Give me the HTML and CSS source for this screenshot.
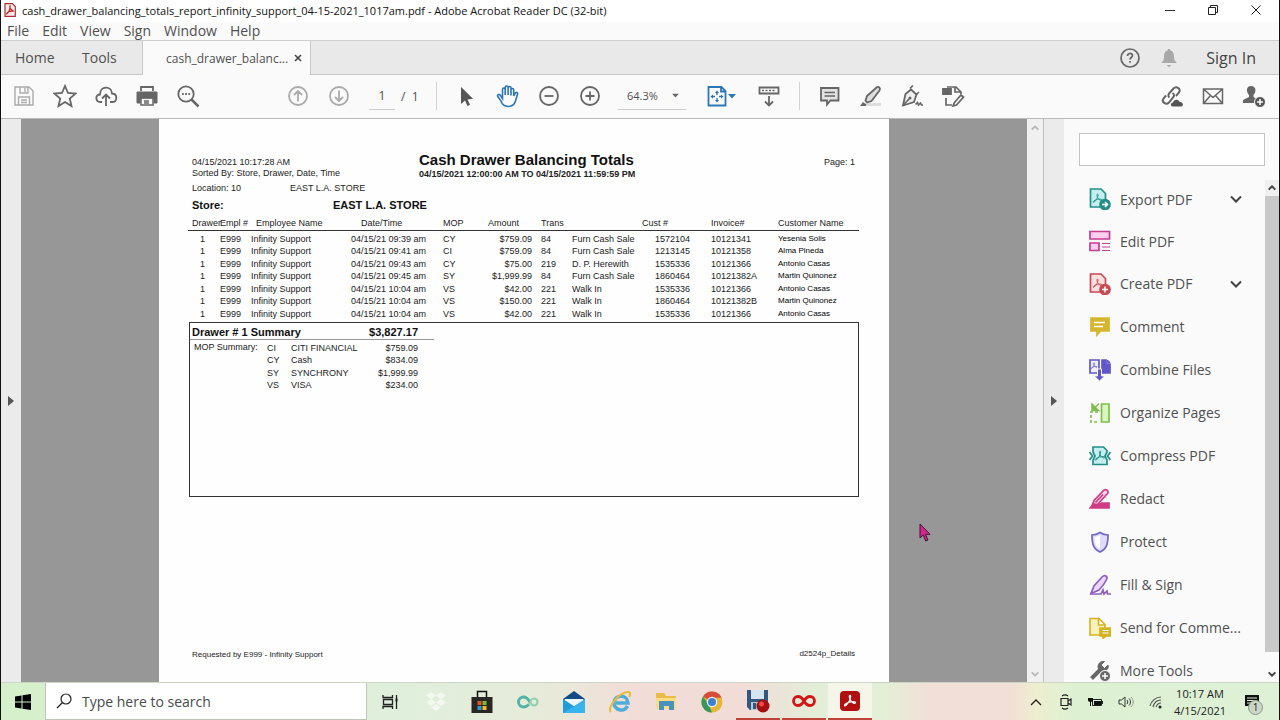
FILE: index.html
```html
<!DOCTYPE html>
<html lang="en">
<head>
<meta charset="utf-8">
<title>cash_drawer_balancing_totals_report_infinity_support_04-15-2021_1017am.pdf - Adobe Acrobat Reader DC (32-bit)</title>
<link rel="stylesheet" href="styles.css">
</head>
<body>
<svg class="defs" aria-hidden="true">
  <symbol id="swirl" viewBox="0 0 12 12"><path d="M6 1.2c-.9 0-.7 2 .1 3.6.8 1.700 2.300 3 3.600 3.200 1.300.1 1.600-1 .2-1.300-2.300-.4-6.200.5-8.100 2.100-1 .9-.5 1.900.6 1.100C4.200 8.500 6.800 4.100 6.600 1.800 6.500 1.300 6.300 1.200 6 1.200z" fill="none" stroke="currentColor" stroke-width="1"/></symbol>
  <symbol id="tri" viewBox="0 0 8 6"><path d="M0 1h8L4 5.500z" fill="currentColor"/></symbol>
  <symbol id="chev" viewBox="0 0 12 8"><path d="M1 1.500l5 5 5-5" fill="none" stroke="currentColor" stroke-width="2"/></symbol>
</svg>
<div class="screen">
  <header class="titlebar">
    <svg class="app-icon" viewBox="0 0 12 14"><path d="M1 .7h7.500L11.300 3.500v9.800H1z" fill="#fbeaea" stroke="#a63036" stroke-width="1.200"/><path d="M6 3c-.8 1 1.300 5 3.800 5.200C7.500 7.500 3.500 8.800 2.600 10.800 4.600 10.500 6.700 5.200 6 3z" fill="none" stroke="#c8252c" stroke-width="1.300"/></svg>
    <span class="title">cash_drawer_balancing_totals_report_infinity_support_04-15-2021_1017am.pdf - Adobe Acrobat Reader DC (32-bit)</span>
    <div class="window-buttons">
      <button aria-label="Minimize"><svg width="12" height="12"><path d="M1 6.500h10" stroke="#333"/></svg></button>
      <button aria-label="Restore"><svg width="12" height="12" fill="none" stroke="#222"><path d="M1.500 3.500h7v7h-7zM3.500 3.500v-2h7v7h-2"/></svg></button>
      <button aria-label="Close"><svg width="12" height="12"><path d="M1.500 1.500l9 9M10.500 1.500l-9 9" stroke="#222"/></svg></button>
    </div>
  </header>
  <nav class="menubar">
    <button>File</button><button>Edit</button><button>View</button><button>Sign</button><button>Window</button><button>Help</button>
  </nav>
  <div class="tabs">
    <button class="tab tab-home">Home</button>
    <button class="tab tab-tools">Tools</button>
    <div class="tab tab-file"><span>cash_drawer_balanc...</span><button class="tab-close" aria-label="Close tab"><svg width="8" height="8"><path d="M1 1l6 6M7 1L1 7" stroke="#444" stroke-width="1.600"/></svg></button></div>
    <div class="account">
      <button aria-label="Help"><svg width="22" height="22" fill="none" stroke="#666" stroke-width="1.700"><circle cx="11" cy="11" r="9"/><path d="M8.500 9c0-3.400 5-3.200 5-.4 0 1.900-2.500 1.900-2.500 4" /><path d="M11 14v1.800"/></svg></button>
      <button aria-label="Notifications"><svg width="18" height="20"><path d="M9 1c1 0 1.500.6 1.600 1.500C13 3.200 14 5.500 14 8c0 4 1 5.500 3 7H1c2-1.500 3-3 3-7 0-2.500 1-4.800 3.400-5.500C7.500 1.600 8 1 9 1zM7 17h4c-.3 2.400-3.700 2.400-4 0z" fill="#a9a9a9"/></svg></button>
      <button class="signin">Sign In</button>
    </div>
  </div>

  <div class="toolbar">
    <div class="group">
      <button class="tool faint" aria-label="Save"><svg viewBox="0 0 24 24"><path d="M3 3h14l4 4v14H3zM8 3v6h8V3M13 4v4M6.500 21v-8h11v8M9 16h6M9 18.500h6" stroke-width="1.400"/></svg></button>
      <button class="tool" aria-label="Star"><svg viewBox="0 0 24 24"><path d="M12 2l3 7 7.500.6-5.700 5 1.700 7.400L12 18l-6.500 4 1.700-7.400-5.700-5L9 9z"/></svg></button>
      <button class="tool" aria-label="Upload to cloud"><svg viewBox="0 0 24 24"><path d="M8 18H6.500C1 18 1 10.500 6 10.500 6 1.500 17.500 1.500 18 9.500c6 .5 5.500 8.500 0 8.500h-2M12 22V11M8 14.500l4-4 4 4"/></svg></button>
      <button class="tool" aria-label="Print"><svg viewBox="0 0 24 24"><path d="M6 7V3h12v4"/><path d="M2 8h20v11h-3v-5H5v5H2z" fill="#666" stroke-width="1"/><path d="M6 14h12v7H6zM9 17h5M9 19h5" stroke-width="1.500"/></svg></button>
      <button class="tool" aria-label="Find"><svg viewBox="0 0 24 24"><circle cx="10" cy="10" r="7.700"/><path d="M15.500 15.500l7 7" stroke-width="2.500"/><path d="M6 10h1.700M9.200 10h1.700M12.400 10h1.700"/></svg></button>
    </div>
    <div class="group pages">
      <button class="tool faint" aria-label="Previous page"><svg viewBox="0 0 24 24"><circle cx="12" cy="12" r="9"/><path d="M12 17.500V7M8 11l4-4 4 4"/></svg></button>
      <button class="tool faint" aria-label="Next page"><svg viewBox="0 0 24 24"><circle cx="12" cy="12" r="9"/><path d="M12 6.500V17M8 13l4 4 4-4"/></svg></button>
      <input class="page-input" aria-label="Page number" value="1"><span class="page-total">/ &nbsp;1</span>
    </div>
    <i class="sep"></i>
    <div class="group">
      <button class="tool" aria-label="Select"><svg viewBox="0 0 24 24"><path d="M6 3v17l4-3.500 2.500 5.500 2.500-1.200-2.500-5.300 5.500-.7z" fill="#555" stroke="none"/></svg></button>
      <button class="tool blue" aria-label="Hand"><svg viewBox="0 0 24 24"><path d="M6.500 14.500V5.500c0-2 2.700-2 2.700 0V11V3.500c0-2 2.900-2 2.900 0V11V4c0-2 2.900-2 2.900 0v7.500V6c0-2 2.700-2 2.700 0v6l1.300-2.500c1-1.700 3-1 2.500.8L19.500 17c-2 7-12 7.500-14.500 0L1.800 12.500c-1-2 1.500-2.800 2.700-1z" stroke-width="1.600"/></svg></button>
      <button class="tool" aria-label="Zoom out"><svg viewBox="0 0 24 24"><circle cx="12" cy="12" r="9"/><path d="M7.500 12h9"/></svg></button>
      <button class="tool" aria-label="Zoom in"><svg viewBox="0 0 24 24"><circle cx="12" cy="12" r="9"/><path d="M7.500 12h9M12 7.500v9"/></svg></button>
      <div class="zoom"><select aria-label="Zoom level"><option>64.3%</option></select><svg width="7" height="5" class="zoom-arrow"><use href="#tri"/></svg></div>
      <button class="tool fit" aria-label="Fit page"><svg viewBox="0 0 24 24"><path d="M3.500 3h13l4 4v14.500h-17zM16 3v4.500h4.500"/><path d="M12 6.500l2 2.500h-4zM12 18.500l2-2.500h-4zM5.500 12.500l2.500-2v4zM18.500 12.500l-2.500-2v4z" fill="#2b6cb0" stroke="none"/><path d="M12 9v2M12 14v2M8 12.500h2M14 12.500h2" stroke-width="1.400"/></svg><svg class="caret" width="8" height="6"><use href="#tri"/></svg></button>
      <button class="tool" aria-label="Reading mode"><svg viewBox="0 0 24 24"><path d="M2.500 3.500h19v6h-19zM12 12v9M8 17.500l4 4 4-4"/><path d="M5 6.500h2M8.500 6.500h2M12 6.500h2M15.500 6.500h2" stroke-width="1.600"/></svg></button>
    </div>
    <i class="sep"></i>
    <div class="group">
      <button class="tool" aria-label="Comment"><svg viewBox="0 0 24 24"><path d="M3 4h17.500v12.500h-8L9 20.500v-4H3z" fill="#e2e2e2"/><path d="M6.500 8.500H17M6.500 12H17" stroke-width="1.400"/></svg></button>
      <button class="tool" aria-label="Highlight"><svg viewBox="0 0 24 24"><path d="M8 19h14v3H6z" fill="#ddd" stroke="none"/><path d="M17.500 3.500c2-1.500 4.500.5 3 3L12.500 17l-4.500 1.500-1.500-2L8 12z" fill="#ddd"/><path d="M1 22l3-4 3.500 2.500-1 1.500z" fill="#666" stroke="none"/></svg></button>
      <button class="tool" aria-label="Sign"><svg viewBox="0 0 24 24"><path d="M11 5.500l5.500 5L14 18 3 21.500 5.500 10z" fill="#eee"/><path d="M3 21.500l6.500-7M10 4.500L13 1.500M16 11l3-3M15.500 20.500l2-2 1 2.500 2-2 1 2H23" stroke-width="1.600"/><circle cx="10" cy="14" r="1.500" fill="#666" stroke="none"/></svg></button>
      <button class="tool" aria-label="More tools"><svg viewBox="0 0 24 24"><path d="M2 5h8v5H2z" fill="#666"/><path d="M6 3h9l5 5v2M14 3v5h6M5 14v7h6M13.500 18.500L20 11l2.500 2-7 8-3.500 1z" stroke-width="1.700"/></svg></button>
    </div>
    <div class="group share">
      <button class="tool" aria-label="Share link"><svg viewBox="0 0 24 24"><path d="M9.500 13.500c-2-1.500-1-3.500 0-4.500l4-4.500c3-3 8 .5 5.500 4L16 12M12.500 9c2.500 1.500 1.500 3.500.5 4.500L9 18.500c-3 3-8-.5-5.500-4L6 11.500" stroke-width="2"/><path d="M13 22.500c-3 0-2.500-4 0-4 1-4 6-3.500 6.500-.5 4-.5 4.500 4.500 1.500 4.500z" fill="#555" stroke="none"/></svg></button>
      <button class="tool" aria-label="Email"><svg viewBox="0 0 24 24"><path d="M2.500 5h19v14.500h-19zM3 5.500l9 8 9-8M3 19l6.500-7.500M21 19l-6.500-7.500" stroke-width="1.500"/></svg></button>
      <button class="tool" aria-label="Add people"><svg viewBox="0 0 24 24"><path d="M9 2c6 0 5 7 2.500 9v2L15 15v4H1v-3l6-3v-2C4 8 4 2 9 2z" fill="#666" stroke="none"/><circle cx="18" cy="18" r="5.500" fill="#555" stroke="#fafafa" stroke-width="1"/><path d="M15 18h6M18 15v6" stroke="#fff" stroke-width="1.500"/></svg></button>
    </div>
  </div>

  <main class="workspace">
    <button class="strip strip-left" aria-label="Open navigation pane"><svg width="6" height="10"><path d="M0 0l6 5-6 5z" fill="#555"/></svg></button>
    <section class="canvas">
      <article class="sheet">
        <div class="report-head">
          <div class="meta"><p>04/15/2021 10:17:28 AM</p><p>Sorted By: Store, Drawer, Date, Time</p></div>
          <div class="heading"><h1>Cash Drawer Balancing Totals</h1><p>04/15/2021 12:00:00 AM TO 04/15/2021 11:59:59 PM</p></div>
          <p class="page-no">Page: 1</p>
        </div>
        <div class="location"><span>Location: 10</span><span>EAST L.A. STORE</span></div>
        <h2 class="store"><span>Store:</span><span>EAST L.A. STORE</span></h2>
        <table class="ledger">
          <colgroup><col class="c-drawer"><col class="c-empl"><col class="c-name"><col class="c-date"><col class="c-mop"><col class="c-amount"><col class="c-trans"><col class="c-desc"><col class="c-cust"><col class="c-inv"><col></colgroup>
          <thead><tr><th>Drawer</th><th>Empl #</th><th class="h-name">Employee Name</th><th class="h-date">Date/Time</th><th>MOP</th><th class="h-amount">Amount</th><th>Trans</th><th class="h-cust" colspan="2">Cust #</th><th>Invoice#</th><th>Customer Name</th></tr></thead>
          <tbody>
            <tr><td>1</td><td>E999</td><td>Infinity Support</td><td>04/15/21 09:39 am</td><td>CY</td><td>$759.09</td><td>84</td><td>Furn Cash Sale</td><td>1572104</td><td>10121341</td><td>Yesenia Solis</td></tr>
            <tr><td>1</td><td>E999</td><td>Infinity Support</td><td>04/15/21 09:41 am</td><td>CI</td><td>$759.09</td><td>84</td><td>Furn Cash Sale</td><td>1213145</td><td>10121358</td><td>Alma Pineda</td></tr>
            <tr><td>1</td><td>E999</td><td>Infinity Support</td><td>04/15/21 09:43 am</td><td>CY</td><td>$75.00</td><td>219</td><td>D. P. Herewith</td><td>1535336</td><td>10121366</td><td>Antonio Casas</td></tr>
            <tr><td>1</td><td>E999</td><td>Infinity Support</td><td>04/15/21 09:45 am</td><td>SY</td><td>$1,999.99</td><td>84</td><td>Furn Cash Sale</td><td>1860464</td><td>10121382A</td><td>Martin Quinonez</td></tr>
            <tr><td>1</td><td>E999</td><td>Infinity Support</td><td>04/15/21 10:04 am</td><td>VS</td><td>$42.00</td><td>221</td><td>Walk In</td><td>1535336</td><td>10121366</td><td>Antonio Casas</td></tr>
            <tr><td>1</td><td>E999</td><td>Infinity Support</td><td>04/15/21 10:04 am</td><td>VS</td><td>$150.00</td><td>221</td><td>Walk In</td><td>1860464</td><td>10121382B</td><td>Martin Quinonez</td></tr>
            <tr><td>1</td><td>E999</td><td>Infinity Support</td><td>04/15/21 10:04 am</td><td>VS</td><td>$42.00</td><td>221</td><td>Walk In</td><td>1535336</td><td>10121366</td><td>Antonio Casas</td></tr>
          </tbody>
        </table>
        <section class="summary">
          <h2><span>Drawer # 1 Summary</span><span>$3,827.17</span></h2>
          <div class="mop">
            <span>MOP Summary:</span>
            <table>
              <tr><td>CI</td><td>CITI FINANCIAL</td><td>$759.09</td></tr>
              <tr><td>CY</td><td>Cash</td><td>$834.09</td></tr>
              <tr><td>SY</td><td>SYNCHRONY</td><td>$1,999.99</td></tr>
              <tr><td>VS</td><td>VISA</td><td>$234.00</td></tr>
            </table>
          </div>
        </section>
        <footer class="report-foot"><span>Requested by E999 - Infinity Support</span><span class="code">d2524p_Details</span></footer>
      </article>
    </section>
    <div class="doc-scroll">
      <svg width="8" height="6" viewBox="0 0 12 8"><path d="M1 6.500l5-5 5 5" fill="none" stroke="#b5b5b5" stroke-width="2.500"/></svg>
      <svg width="8" height="6" viewBox="0 0 12 8"><path d="M1 1.500l5 5 5-5" fill="none" stroke="#b5b5b5" stroke-width="2.500"/></svg>
    </div>
    <button class="strip strip-right" aria-label="Collapse tools pane"><svg width="6" height="10"><path d="M0 0l6 5-6 5z" fill="#555"/></svg></button>
    <aside class="tools-pane">
      <input class="tool-search" aria-label="Search tools" type="text">
      <div class="tool-body">
        <div class="tool-list">
          <button><svg class="ti teal" viewBox="0 0 22 22"><path d="M1.500 1h10.500l4.500 4.500V19h-15z"/><use href="#swirl" x="3" y="5" width="11" height="11"/><circle cx="16" cy="16.500" r="5" class="solid"/><path d="M13 16.500h5M16 14l2.500 2.500L16 19" class="white"/></svg><span>Export PDF</span><svg class="more" width="12" height="8"><use href="#chev"/></svg></button>
          <button><svg class="ti pink" viewBox="0 0 22 22"><path d="M1 1.500h19.500v7.500H1zM1 13h9v7.500H1z"/><path d="M13 13.500h8M13 17h8M13 20.500h8" stroke-width="1.200"/></svg><span>Edit PDF</span></button>
          <button><svg class="ti red" viewBox="0 0 22 22"><path d="M1.500 1h10.500l4.500 4.500V19h-15z"/><use href="#swirl" x="3" y="5" width="11" height="11"/><circle cx="16" cy="16.500" r="5" class="solid"/><path d="M13 16.500h6M16 13.500v6" class="white"/></svg><span>Create PDF</span><svg class="more" width="12" height="8"><use href="#chev"/></svg></button>
          <button><svg class="ti yellow" viewBox="0 0 22 22"><path d="M2 2h18v13h-8.500L8 19v-4H2z" class="solid"/><path d="M5 6.500h11M5 10.500h9" class="white"/></svg><span>Comment</span></button>
          <button><svg class="ti violet" viewBox="0 0 22 22"><path d="M1 1h9v13H1z"/><use href="#swirl" x="1" y="3" width="8" height="8"/><path d="M13 1h4v4h4v9h-8z" class="solid"/><path d="M18.500 1l2.500 2.500h-2.500z" class="solid" stroke-width="1"/><path d="M8.500 10h4v7H16l-5.500 5L5 17h3.500z" class="solid edge"/></svg><span>Combine Files</span></button>
          <button><svg class="ti green" viewBox="0 0 22 22"><path d="M12.500 2h7.500v18h-7.500z"/><path d="M9 10H2v10h7" fill="none" stroke-dasharray="3 2"/><path d="M10 1.500L4 7.500M3 2v6.500h6.500z" class="solid" stroke-width="1.500"/></svg><span>Organize Pages</span></button>
          <button><svg class="ti teal" viewBox="0 0 22 22"><path d="M4 7V2h10.500L18 5.500V7l-2 4 2 4v4.500H4V15l2-4z"/><use href="#swirl" x="5" y="5" width="12" height="12"/><path d="M.5 7l3 4-3 4M21.500 7l-3 4 3 4" fill="none"/></svg><span>Compress PDF</span></button>
          <button><svg class="ti magenta" viewBox="0 0 22 22"><path d="M14 3c2-3 6.500-.5 4.500 2.500L9 16l-6 2 2-5.500z"/><path d="M6.500 14.500L14 6.500" /><path d="M1 20l4-4 4 1 4-2h7v5z" class="solid"/></svg><span>Redact</span></button>
          <button><svg class="ti indigo" viewBox="0 0 22 22"><path d="M11 1.500c3 2 5 2.500 8 2.500 0 8-1 14-8 17C4 18 3 12 3 4c3 0 5-.5 8-2.500z"/><path d="M11 4v14c-4-2-5.500-7-5.500-12 2-.2 4-1 5.500-2z" fill="#fff" stroke="none"/></svg><span>Protect</span></button>
          <button><svg class="ti purple" viewBox="0 0 22 22"><path d="M13 3c3-3 6-.5 4.500 2.500C16 9 13 13 10 16l-8 3.500L5 12z"/><path d="M1 20h11l2-4 1 4 3-3 .5 3H22" fill="none"/></svg><span>Fill &amp; Sign</span></button>
          <button><svg class="ti gold" viewBox="0 0 22 22"><path d="M1 1.500h9l6 6V18H1zM9.500 2v6H16"/><path d="M11 11h10.500v8H17l-3 2.500V19h-3z" class="solid"/><path d="M13.500 13.500h6M13.500 16h6" class="white thin"/></svg><span>Send for Comme...</span></button>
          <button><svg class="ti grey" viewBox="0 0 22 22"><path d="M2.500 18.500L12 9" stroke-width="4"/><path d="M15.500 1.500L12 5l3.500 3.500L19 5c1 3-1 6-5 6-4-.5-6-3-4.500-6.500 1-2.500 3.500-3.500 6-3z" class="solid" stroke-width="1"/><circle cx="16" cy="16" r="5.500" class="solid edge"/><path d="M13 16h6M16 13v6" class="white"/></svg><span>More Tools</span></button>
        </div>
        <div class="pane-scroll">
          <div class="arrow-box"><svg width="8" height="6" viewBox="0 0 12 8"><path d="M1 6.500l5-5 5 5" fill="none" stroke="#444" stroke-width="3"/></svg></div>
          <div class="thumb"></div>
          <div class="arrow-box arrow-down"><svg width="8" height="6" viewBox="0 0 12 8"><path d="M1 1.500l5 5 5-5" fill="none" stroke="#444" stroke-width="3"/></svg></div>
        </div>
      </div>
    </aside>
  </main>

  <footer class="taskbar">
    <button class="start" aria-label="Start"><svg width="16" height="16"><path d="M0 2.500L6.500 1.500v6H0zM7.500 1.300L16 0v7.500H7.500zM0 8.500h6.500v6L0 13.500zM7.500 8.500H16V16l-8.500-1.300z"/></svg></button>
    <label class="search"><svg width="16" height="16" fill="none" stroke="#222" stroke-width="1.200"><circle cx="10" cy="6" r="5"/><path d="M6.500 9.500L1 15"/></svg><input type="text" placeholder="Type here to search" aria-label="Type here to search"></label>
    <div class="apps">
      <button aria-label="Task view"><svg viewBox="0 0 24 24" fill="none" stroke="#222" stroke-width="1.300"><path d="M5 5v2.500h9.500V5M5 19v-2.500h9.500V19M5.500 9.500v5h9v-5zM18.500 5v14"/><path d="M17.500 10h2" stroke-width="3"/></svg></button>
      <button aria-label="Dropbox"><svg viewBox="0 0 24 24" fill="#f4f8f0"><path d="M7 2l5 3.500L7 9 2 5.500zM17 2l5 3.500L17 9l-5-3.500zM7 9l5 3.500L7 16l-5-3.500zM17 9l5 3.500-5 3.500-5-3.500zM12 14l5 3.500-5 3.500-5-3.500z"/></svg></button>
      <button aria-label="Store"><svg viewBox="0 0 24 24"><path d="M7.500 7V1.500h9V7" fill="none" stroke="#111" stroke-width="1.500"/><path d="M1.500 7h21v16h-21z" fill="#292724"/><path fill="#e0562d" d="M7.500 11h4v4h-4z"/><path fill="#7fba35" d="M12.500 11h4v4h-4z"/><path fill="#2c9bd8" d="M7.500 16h4v4h-4z"/><path fill="#f3b91f" d="M12.500 16h4v4h-4z"/></svg></button>
      <button aria-label="Infinity"><svg viewBox="0 0 24 24" fill="none" stroke="#4fb3a8" stroke-width="2.800"><path d="M13 14.500C11 16.500 9.500 17 7.500 17a5 5 0 010-10c3 0 5 2.500 6.500 5"/><path d="M14 12c1 2 2 3.500 4 3.500a3.500 3.500 0 000-7c-2.500 0-4 3-5 6" stroke="#8fcfac" stroke-width="2.200"/></svg></button>
      <button aria-label="Mail"><svg viewBox="0 0 24 24"><path d="M1 9L12 1l11 8v14H1z" fill="#134b87"/><path d="M3 9h18v4l-9 6-9-6z" fill="#eef7fc"/><path d="M3 9h18l-4 3z" fill="#134b87"/><path d="M1 9l22 14H1z" fill="#229bdb"/><path d="M23 9v14H1z" fill="#38b3ed"/><path d="M2 9h20l-10 7z" fill="#eef7fc"/></svg></button>
      <button aria-label="Internet Explorer"><svg viewBox="0 0 24 24" fill="none"><path d="M19.500 16c-3.500 7-14 4-13.500-3.500C7 4 19.500 4 20 13H8" stroke="#51acd9" stroke-width="3.500"/><path d="M3 22C-2 18 12 1 21 2c2 1 1 3 0 5" stroke="#e7bd3a" stroke-width="2"/></svg></button>
      <button aria-label="File Explorer"><svg viewBox="0 0 24 24"><path d="M2 3h8l2 3h10v13H2z" fill="#e7bb48"/><path d="M2 8h20v11H2z" fill="#fadd82"/><path d="M5 20v-9h15v9h-5v-4h-5v4z" fill="#4a91bd"/></svg></button>
      <button aria-label="Chrome"><svg viewBox="0 0 24 24"><circle cx="12" cy="12" r="10.500" fill="#e3b83a"/><path d="M12 12L3 6.500A10.500 10.500 0 0121.500 7.500L12 8z" fill="#d84a3a"/><path d="M3 6.500l5.500 8L12 22.500A10.500 10.500 0 013 6.500z" fill="#39965a"/><circle cx="12" cy="12" r="5.200" fill="#f3f3ef"/><circle cx="12" cy="12" r="4" fill="#3f7fd2"/></svg></button>
      <button class="running" aria-label="Screen recorder"><svg viewBox="0 0 24 24"><path d="M1 1h21v20H4l-3-3z" fill="#34577e"/><path d="M5 1h13v9H5z" fill="#d5e5ef"/><path d="M5 13h12v8H5z" fill="#b5c8d5"/><path d="M7 14h3v6H7z" fill="#34577e"/><circle cx="17" cy="17" r="6.500" fill="#a30f12"/><circle cx="15.500" cy="15" r="2.500" fill="#ef4b43"/></svg></button>
      <button class="running" aria-label="Infinity app"><svg viewBox="0 0 24 24" fill="none" stroke="#d31717" stroke-width="2.800"><path d="M12 12c-2-3.500-4-4.500-6-4.500a4.500 4.500 0 000 9c2 0 4-1 6-4.500s4-4.500 6-4.500a4.500 4.500 0 010 9c-2 0-4-1-6-4.500z"/></svg></button>
      <button class="running active" aria-label="Acrobat Reader"><svg viewBox="0 0 24 24"><rect x="2" y="2" width="20" height="20" rx="4" fill="#b11010"/><g color="#fff"><use href="#swirl" x="5" y="5" width="14" height="14"/></g></svg></button>
    </div>
    <div class="tray">
      <button aria-label="Hidden icons"><svg width="12" height="8"><path d="M1 7l5-5 5 5" fill="none" stroke="#222" stroke-width="1.300"/></svg></button>
      <button aria-label="Meet now"><svg width="14" height="16" fill="none" stroke="#222" stroke-width="1.200"><path d="M2 4.500h7v7H2zM9 7l3-2v6L9 9M3 2c2-1.500 4-1.500 6 0M3 14c2 1.500 4 1.500 6 0"/></svg></button>
      <button aria-label="Battery"><svg width="16" height="12"><path d="M4.500 3.500h9v6h-9zM14.500 5v3" fill="none" stroke="#222"/><path d="M6 5h7v4H6zM0 2h5v3L3 6v4H2V6L0 5z" fill="#111"/></svg></button>
      <button aria-label="Volume"><svg width="16" height="14" fill="none" stroke="#333"><path d="M1 5h2.500L7 2v10L3.500 9H1zM9 5c1 1 1 3 0 4M11 3.500c2 2 2 5 0 7"/><path d="M13 2c3 3 3 7 0 10" stroke="#999"/></svg></button>
      <button aria-label="Network"><svg width="14" height="14" fill="none" stroke="#555" stroke-width="1.200"><path d="M1 11C2 6 7 2 12 2M4 12c1-4 4-7 8-7M7 12c1-2.500 2.500-4 5-4"/><circle cx="11" cy="12" r="1.500" fill="#222" stroke="none"/></svg></button>
      <div class="clock"><span>10:17 AM</span><span>4/15/2021</span></div>
      <button class="notice" aria-label="Notifications"><svg width="16" height="16"><path d="M1 1h14v11h-6l-3 3v-3H1z" fill="#111"/><path d="M3 4h10M3 6.500h10M3 9h8" stroke="#dff0d8"/></svg><span class="badge">1</span></button>
    </div>
  </footer>
  <svg class="pointer" viewBox="0 0 12 19"><path d="M1 1v14l3.200-3 2.500 6 2.300-1-2.500-5.700H11z" fill="#d3268f" stroke="#3d1530" stroke-width="1"/></svg>
</div>
</body>
</html>
```
FILE: styles.css
```css
* { box-sizing: border-box; }
body { margin: 0; font-family: "Open Sans", "Noto Sans", sans-serif; color: #505050; }
button, input, select { font: inherit; color: inherit; border: 0; background: none; padding: 0; margin: 0; border-radius: 0; }
p, h1, h2 { margin: 0; }
svg { flex: none; display: block; }
.defs { position: absolute; width: 0; height: 0; }

.screen { position: relative; height: 100vh; display: flex; flex-direction: column; border-left: 1px solid #111; border-right: 1px solid #111; background: #fafafa; overflow: hidden; }

.titlebar { display: flex; align-items: center; height: 22px; padding: 0 2px 2px 3px; background: #fff; color: #111; font-size: 11px; white-space: nowrap; }
.app-icon { width: 12px; height: 14px; margin-right: 6px; }
.title { flex: 1; }
.window-buttons { display: flex; }
.window-buttons button { width: 43px; height: 18px; display: flex; align-items: center; justify-content: center; }

.menubar { display: flex; gap: 13px; height: 18px; padding-left: 6px; align-items: center; font-size: 14px; line-height: 18px; }

.tabs { display: flex; height: 35px; background: #e9e9e9; border-top: 1px solid #cfcfcf; border-bottom: 1px solid #c6c6c6; font-size: 14px; }
.tab-home { padding-left: 14px; width: 68px; text-align: left; }
.tab-tools { padding-left: 13px; width: 73px; text-align: left; }
.tab-file { display: flex; align-items: center; gap: 6px; width: 169px; height: 34px; padding-left: 23px; font-size: 12px; background: #fafafa; border-left: 1px solid #c9c9c9; border-right: 1px solid #c9c9c9; }
.account { margin-left: auto; display: flex; align-items: center; padding-right: 23px; gap: 19px; }
.signin { margin-left: 9px; color: #444; font-size: 16px; font-weight: 500; }

.toolbar { display: flex; align-items: center; height: 44px; padding: 0 5px 1px 2px; border-bottom: 1px solid #b9b9b9; }
.group { display: flex; align-items: center; }
.tool { width: 41px; height: 32px; display: flex; align-items: center; justify-content: center; color: #666; }
.tool svg { width: 24px; height: 24px; fill: none; stroke: currentColor; stroke-width: 1.8; }
.faint { color: #aaa; }
.blue, .fit { color: #2b76b9; }
.pages { margin-left: 69px; }
.page-input { width: 26px; height: 27px; margin: 0 6px 0 10px; text-align: center; border-bottom: 1px solid #ccc; font-size: 12px; }
.page-total { width: 35px; font-size: 12px; }
.sep { width: 1px; height: 28px; margin: 0 9px 0 0; background: #d2d2d2; }
.zoom { display: flex; align-items: center; width: 68px; height: 27px; margin: 0 10px 0 8px; border-bottom: 1px solid #ccc; }
.zoom select { appearance: none; width: 54px; padding-left: 9px; font-size: 11px; }
.zoom .zoom-arrow { color: #666; }
.fit { position: relative; margin-right: 11px; }
.tool .caret { position: absolute; right: 1px; top: 13px; width: 8px; height: 6px; stroke: none; }
.toolbar .sep:nth-of-type(2) { margin-left: 10px; }
.share { margin-left: auto; }

.workspace { flex: 1; min-height: 0; display: flex; }
.strip { display: flex; align-items: center; justify-content: center; width: 20px; background: #ebebeb; }
.strip-right { width: 21px; border-left: 1px solid #bdbdbd; }
.canvas { flex: 1; min-width: 0; display: flex; justify-content: center; background: #979797; overflow: hidden; }
.doc-scroll { width: 16px; background: #f0f0f0; display: flex; flex-direction: column; justify-content: space-between; align-items: center; padding: 6px 0 5px; }

.sheet { display: flex; flex-direction: column; width: 730px; padding: 32px 30px 21px 29px; background: #fefefe; color: #222; font-family: "Liberation Sans", Arial, sans-serif; font-size: 9px; line-height: 12px; }
.report-head { display: flex; padding: 0 4px; }
.meta { width: 227px; padding-top: 6px; line-height: 11px; }
.heading { flex: 1; }
.heading h1 { font-size: 15px; line-height: 17px; color: #111; }
.heading p { line-height: 13px; font-weight: bold; }
.page-no { padding-top: 5px; }
.location { display: flex; padding: 1px 4px 0; }
.location span:first-child { width: 98px; }
.store { display: flex; padding: 4px 4px 0; font-size: 11px; line-height: 14px; color: #111; }
.store span:first-child { width: 141px; }

.ledger { margin-top: 4px; width: 100%; table-layout: fixed; border-collapse: collapse; white-space: nowrap; }
.ledger th { padding: 0; height: 14px; font-weight: normal; text-align: left; border-bottom: 1px solid #333; }
.ledger td { padding: 0; height: 12px; line-height: 12px; }
.ledger tr:nth-child(even) td { height: 13px; }
.ledger tbody::before { content: ""; display: block; height: 2px; }
.c-drawer { width: 32px; } .c-empl { width: 31px; } .c-name { width: 100px; } .c-date { width: 92px; }
.c-mop { width: 34px; } .c-amount { width: 64px; } .c-trans { width: 31px; } .c-desc { width: 83px; }
.c-cust { width: 56px; } .c-inv { width: 67px; }
.ledger th:first-child { padding-left: 4px; }
.ledger td:first-child { padding-left: 12px; }
.ledger .h-name { padding-left: 5px; }
.ledger .h-date { padding-left: 10px; }
.ledger .h-amount { text-align: right; padding-right: 22px; }
.ledger .h-cust { padding-left: 70px; }
.ledger td:nth-child(6) { text-align: right; padding-right: 9px; }
.ledger td:last-child { font-size: 8px; color: #000; }

.summary { height: 175px; margin: 2px 0 0 1px; border: 1px solid #333; }
.summary h2 { display: flex; justify-content: space-between; width: 244px; padding: 2px 16px 0 2px; font-size: 11px; line-height: 14px; color: #111; border-bottom: 1px solid #999; }
.mop { display: flex; padding: 1px 0 0 4px; }
.mop > span { width: 73px; }
.mop table { border-collapse: collapse; width: 151px; margin-top: 1px; }
.mop td { padding: 0; height: 12px; }
.mop tr:nth-child(even) td { height: 13px; }
.mop td:first-child { width: 24px; }
.mop td:last-child { text-align: right; }
.report-foot { margin-top: auto; display: flex; justify-content: space-between; padding: 0 4px; font-size: 8px; }
.code { line-height: 9px; }

.tools-pane { width: 215px; display: flex; flex-direction: column; padding-top: 14px; }
.tool-search { height: 33px; margin: 0 14px 0 15px; background: #fff; border: 1px solid #c4c4c4; }
.tool-body { flex: 1; min-height: 0; display: flex; margin-top: 12px; overflow: hidden; }
.tool-list { flex: 1; display: flex; flex-direction: column; }
.tool-list button { flex: none; display: flex; align-items: center; height: 43px; padding: 0 23px 0 25px; font-size: 14px; white-space: nowrap; }
.tool-list button:nth-child(-n+2) { height: 42px; }
.ti { width: 22px; height: 22px; margin-right: 9px; stroke: currentColor; stroke-width: 1.7; }
.more { margin-left: auto; color: #444; }
.solid { fill: currentColor; }
.white { fill: none; stroke: #fff; stroke-width: 1.5; }
.thin { stroke-width: 1; }
.edge { stroke: #fafafa; stroke-width: 1; }
.teal { color: #238f88; fill: #c5eeee; }
.pink { color: #c43d91; fill: #ffd0ee; }
.red { color: #c94952; fill: #ffe0e0; }
.yellow { color: #d6b62f; }
.violet { color: #6157c8; fill: #f0edff; }
.green { color: #80bd4e; fill: #d9f7bd; }
.magenta { color: #cf3c83; fill: #ffd5e8; }
.indigo { color: #7169c5; fill: #dfdcfb; }
.purple { color: #8d60bd; fill: #ecd8ff; }
.gold { color: #d4b424; fill: #fbf1bd; }
.grey { color: #666; fill: none; }
.pane-scroll { width: 14px; display: flex; flex-direction: column; margin-top: 2px; background: #f0f0f0; }
.arrow-box { height: 16px; display: flex; align-items: center; justify-content: center; }
.thumb { flex: 1; background: #c9c9c9; }
.arrow-down { height: 30px; padding-top: 14px; background: #fafafa; }

.taskbar { display: flex; align-items: stretch; height: 38px; border-top: 1px solid #cdd6c6; background: linear-gradient(90deg, #d5f0cb 0%, #e0efdc 32%, #e8ead9 43%, #f2dcd8 50%, #f1dcd8 58%, #e3eed8 64%, #e4efd7 69%, #f2dfd8 73%, #f2dfd6 79%, #eeeed0 81%, #def0d2 84%, #def1d6 100%); }
.start { width: 44px; display: flex; align-items: center; justify-content: center; }
.search { display: flex; align-items: center; gap: 10px; width: 322px; padding-left: 10px; background: #fff; border: 1px solid #bfc7bb; border-top: 0; font-size: 14px; }
.search input { flex: 1; min-width: 0; outline: 0; }
.search input::placeholder { color: #4a4a4a; opacity: 1; }
.apps { display: flex; }
.apps button { width: 46px; display: flex; align-items: center; justify-content: center; }
.apps svg { width: 24px; height: 24px; }
.apps .running { width: 44px; margin: 0 1px; border-bottom: 2px solid #bf4339; }
.apps .active { background: #f5f5ea; }
.tray { margin-left: auto; display: flex; align-items: center; color: #222; }
.tray > button { width: 30px; height: 36px; display: flex; align-items: center; justify-content: center; }
.clock { display: flex; flex-direction: column; align-items: center; width: 58px; font-size: 11px; line-height: 17px; }
.tray .notice { position: relative; width: 46px; margin-right: 4px; }
.badge { position: absolute; left: 19px; top: 16px; width: 15px; height: 15px; border: 1px solid #8c9689; border-radius: 50%; background: #ccd6c6; font-size: 10px; line-height: 13px; text-align: center; }
.pointer { position: absolute; left: 918px; top: 523px; width: 12px; height: 19px; }
```
